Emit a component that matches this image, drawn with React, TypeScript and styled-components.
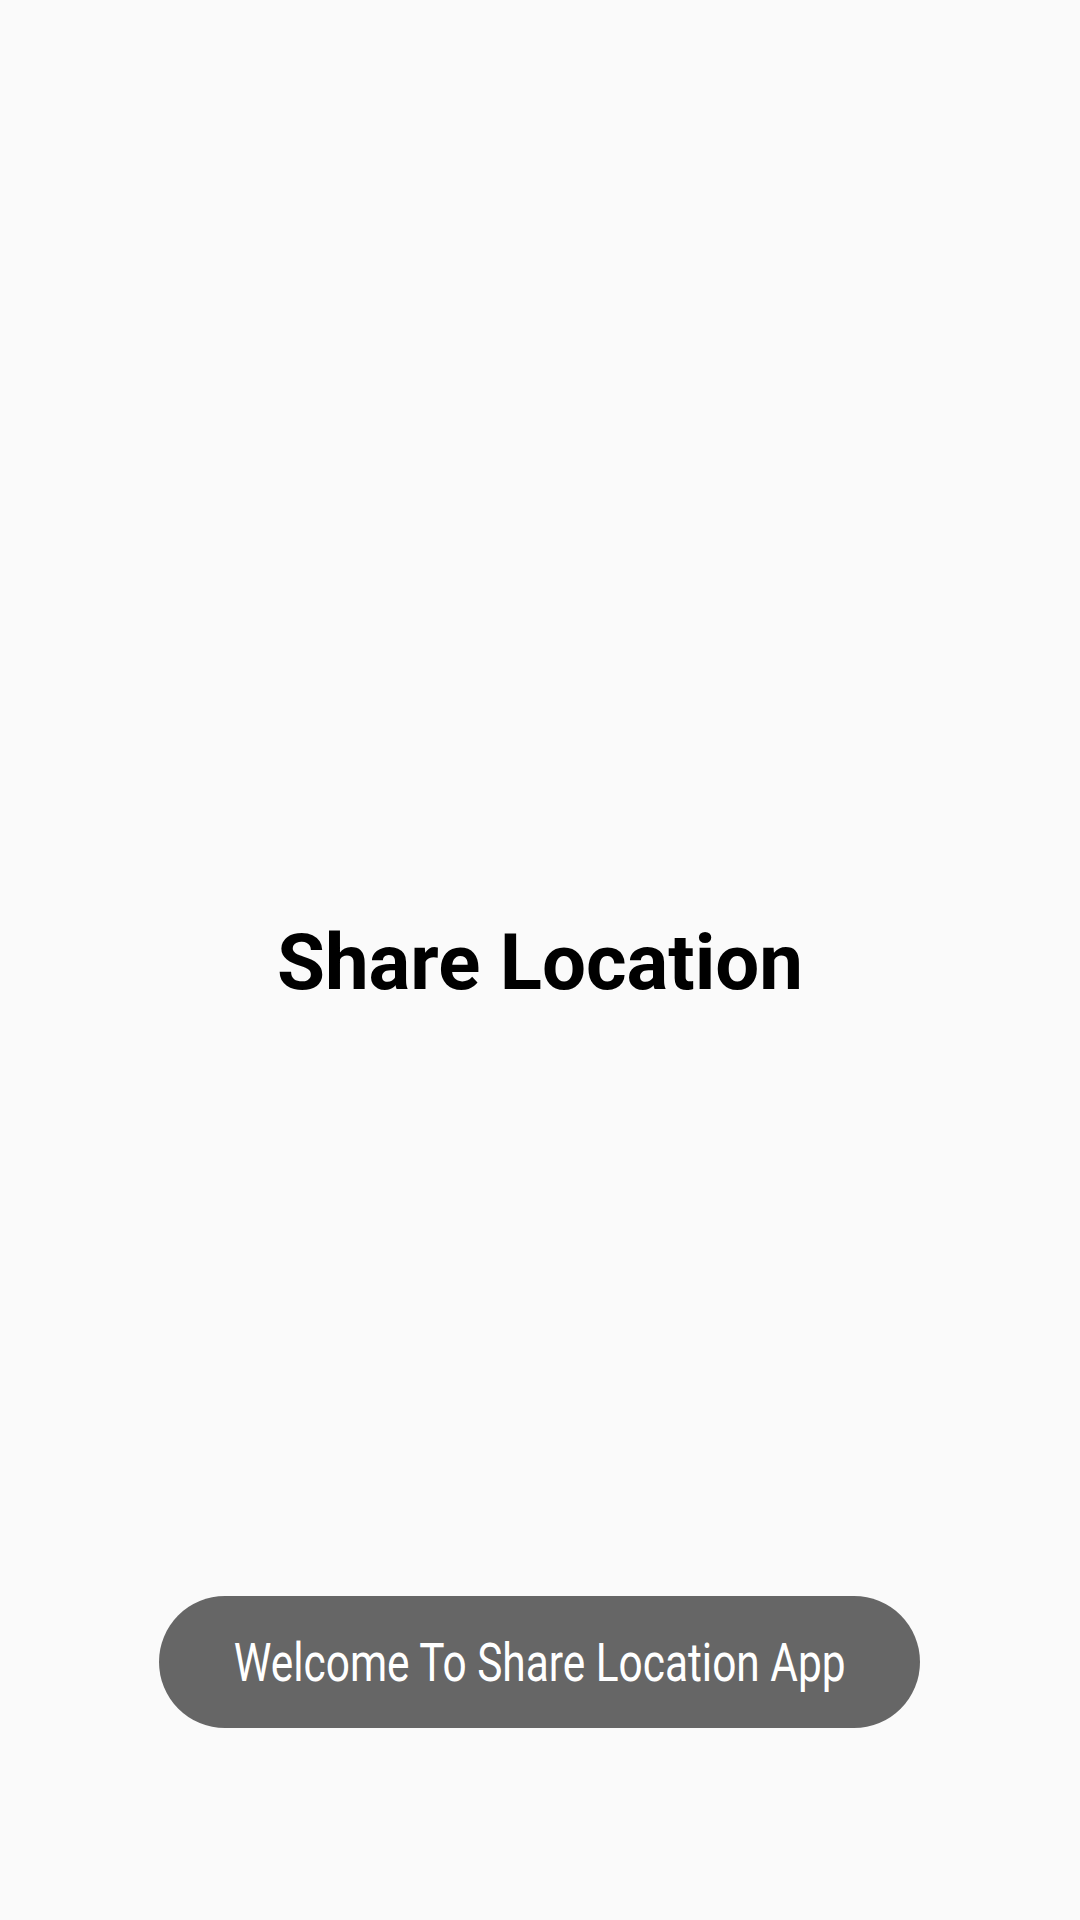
import React from "react";
import styled, { createGlobalStyle } from "styled-components";

const Global = createGlobalStyle`
  html, body { margin: 0; padding: 0; background: #fafafa; }
  #root { min-height: 1920px; }
`;

const Screen = styled.div`
  width: 1080px;
  height: 1920px;
  background: #fafafa;
  display: flex;
  flex-direction: column;
  align-items: center;
`;

const Center = styled.div`
  flex: 1;
  display: flex;
  align-items: center;
  justify-content: center;
  padding-top: 4px;
`;

const Title = styled.h1`
  margin: 0;
  font-family: Roboto, "Liberation Sans", sans-serif;
  font-weight: 700;
  font-size: 78px;
  color: #000;
  letter-spacing: 0;
`;

const Toast = styled.div`
  position: absolute;
  top: 1596px;
  left: 159px;
  width: 761px;
  height: 132px;
  border-radius: 66px;
  background: #666666;
  display: flex;
  align-items: center;
  justify-content: center;
`;

const ToastText = styled.span`
  font-family: Roboto, "Liberation Sans", sans-serif;
  font-size: 54px;
  font-weight: 400;
  color: #fff;
  white-space: nowrap;
  transform: scaleX(0.785);
`;

export default function App() {
  return (
    <>
      <Global />
      <Screen>
        <Center>
          <Title>Share Location</Title>
        </Center>
      </Screen>
      <Toast>
        <ToastText>Welcome To Share Location App</ToastText>
      </Toast>
    </>
  );
}
